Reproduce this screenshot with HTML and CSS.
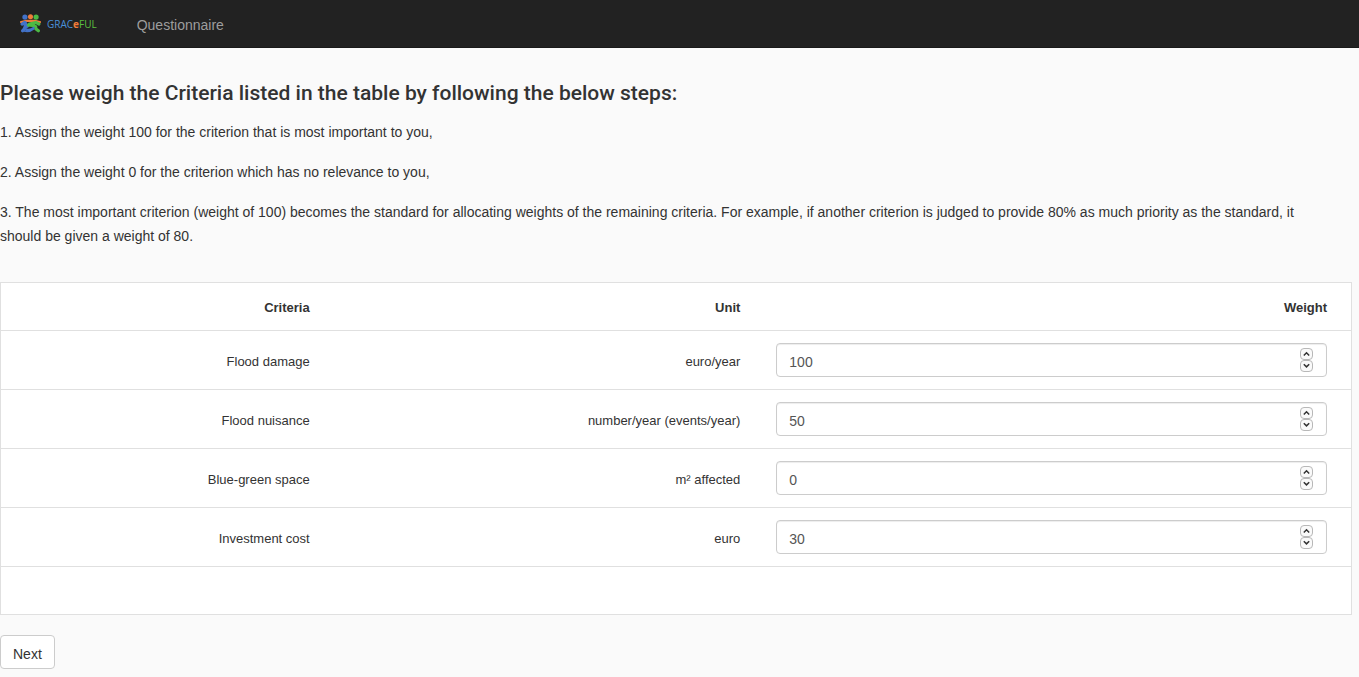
FILE: index.html
```html
<!DOCTYPE html>
<html lang="en">
<head>
<meta charset="utf-8">
<title>Questionnaire</title>
<link rel="stylesheet" href="styles.css">
</head>
<body>
<svg class="defs" aria-hidden="true">
  <symbol id="chev-up" viewBox="0 0 11 10"><path d="M2.800 6.500 5.500 3.800l2.700 2.700" fill="none" stroke="#333" stroke-width="1.500"/></symbol>
  <symbol id="chev-down" viewBox="0 0 11 10"><path d="M2.800 3.200 5.500 5.900l2.700-2.700" fill="none" stroke="#333" stroke-width="1.500"/></symbol>
</svg>
<nav class="navbar">
  <a class="brand" href="#">
    <svg class="brand-mark" viewBox="0 0 20 18" aria-hidden="true">
      <path d="M1 7.500 6 6.500h8l5 1" fill="none" stroke="#f07c3a" stroke-width="2" stroke-linecap="round"/>
      <g fill="none" stroke="#4272c8" stroke-width="3" stroke-linecap="round" stroke-linejoin="round">
        <path d="M2 9.500 4.500 8 7 11.500 4.500 13M5 8v5l-2.500 3"/>
      </g>
      <g fill="none" stroke="#4cb944" stroke-width="3" stroke-linecap="round" stroke-linejoin="round">
        <path d="M18 9.500 15 8l-6 1.500L15 12v2l2.500 2"/>
        <path d="M8 10.500h5"/>
      </g>
      <path d="M4 13.500c3 2 6 1.800 9-.500M4 16c4 1 6 .500 9-2" fill="none" stroke="#4272c8" stroke-width="1.800" stroke-linecap="round"/>
      <circle cx="4.700" cy="2.900" r="2.500" fill="#4272c8"/>
      <circle cx="10" cy="2.500" r="2.400" fill="#f07c3a"/>
      <circle cx="15.300" cy="2.900" r="2.500" fill="#4cb944"/>
    </svg>
    <span class="brand-name"><span class="blue">GRAC</span><span class="orange">e</span><span class="green">FUL</span></span>
  </a>
  <a class="nav-link" href="#">Questionnaire</a>
</nav>
<main>
  <h1 class="title">Please weigh the Criteria listed in the table by following the below steps:</h1>
  <p class="step">1. Assign the weight 100 for the criterion that is most important to you,</p>
  <p class="step">2. Assign the weight 0 for the criterion which has no relevance to you,</p>
  <p class="step">3. The most important criterion (weight of 100) becomes the standard for allocating weights of the remaining criteria. For example, if another criterion is judged to provide 80% as much priority as the standard, it should be given a weight of 80.</p>
  <form class="form">
    <table class="criteria">
      <colgroup><col class="col-name"><col class="col-unit"><col class="col-weight"></colgroup>
      <thead><tr><th scope="col">Criteria</th><th scope="col">Unit</th><th scope="col">Weight</th></tr></thead>
      <tbody>
        <tr><td><label for="w1">Flood damage</label></td><td>euro/year</td><td><div class="number"><input id="w1" type="number" value="100"><span class="spin"><button type="button" aria-label="Increase"><svg><use href="#chev-up"/></svg></button><button type="button" aria-label="Decrease"><svg><use href="#chev-down"/></svg></button></span></div></td></tr>
        <tr><td><label for="w2">Flood nuisance</label></td><td>number/year (events/year)</td><td><div class="number"><input id="w2" type="number" value="50"><span class="spin"><button type="button" aria-label="Increase"><svg><use href="#chev-up"/></svg></button><button type="button" aria-label="Decrease"><svg><use href="#chev-down"/></svg></button></span></div></td></tr>
        <tr><td><label for="w3">Blue-green space</label></td><td>m² affected</td><td><div class="number"><input id="w3" type="number" value="0"><span class="spin"><button type="button" aria-label="Increase"><svg><use href="#chev-up"/></svg></button><button type="button" aria-label="Decrease"><svg><use href="#chev-down"/></svg></button></span></div></td></tr>
        <tr><td><label for="w4">Investment cost</label></td><td>euro</td><td><div class="number"><input id="w4" type="number" value="30"><span class="spin"><button type="button" aria-label="Increase"><svg><use href="#chev-up"/></svg></button><button type="button" aria-label="Decrease"><svg><use href="#chev-down"/></svg></button></span></div></td></tr>
        <tr class="blank"><td></td><td></td><td></td></tr>
      </tbody>
    </table>
    <button class="next" type="button">Next</button>
  </form>
</main>
</body>
</html>
```
FILE: styles.css
```css
* { box-sizing: border-box; }
body {
  margin: 0;
  background: #fafafa;
  color: #333;
  font: 14px/24px "Liberation Sans", Arial, sans-serif;
}
.defs { display: none; }
.navbar {
  display: flex;
  align-items: center;
  gap: 40px;
  height: 48px;
  padding: 0 20px;
  background: #222;
  border-bottom: 1px solid #1a1a1a;
}
.brand {
  display: flex;
  align-items: center;
  gap: 6px;
  text-decoration: none;
}
.brand-mark { width: 21px; height: 19px; }
.brand-name { font: 10px/20px "Open Sans", sans-serif; }
.blue { color: #4a90d9; }
.orange { color: #f07c3a; font-weight: 700; }
.green { color: #5cc040; }
.nav-link { color: #9d9d9d; text-decoration: none; padding-top: 2px; }
.title {
  margin: 29px 0 11px;
  font: 500 21px/32px Roboto, sans-serif;
}
.step { margin: 0 0 16px; padding-right: 32px; }
.form { padding: 18px 7px 8px 0; }
.criteria {
  width: 100%;
  table-layout: fixed;
  border-collapse: separate;
  border-spacing: 0;
  border: 1px solid #e0e0e0;
  background: #fff;
  font-size: 13px;
  line-height: 24px;
  text-align: right;
}
.col-name { width: 24.2%; }
.col-unit { width: 31.9%; }
.criteria th { padding: 13px 18px 10px; text-align: right; }
.criteria td { padding: 16px 18px 12px; border-top: 1px solid #e0e0e0; }
.criteria th:last-child, .criteria td:last-child { padding-right: 24px; }
.criteria td:last-child { padding-top: 12px; }
.criteria .blank td { height: 48px; }
.number { position: relative; }
.number input {
  display: block;
  width: 100%;
  height: 34px;
  padding: 7px 36px 3px 12px;
  border: 1px solid #ccc;
  border-radius: 4px;
  background: #fff;
  box-shadow: inset 0 1px 1px rgba(0, 0, 0, .075);
  color: #555;
  font: 14px/20px "Liberation Sans", Arial, sans-serif;
  appearance: textfield;
}
.number input::-webkit-inner-spin-button { appearance: none; margin: 0; }
.spin {
  position: absolute;
  top: 5px;
  right: 14px;
  display: grid;
}
.spin button {
  width: 13px;
  height: 12px;
  padding: 0;
  border: 1px solid #b8b8b8;
  border-radius: 4px;
  background: #fafafa;
}
.spin svg { display: block; width: 11px; height: 10px; }
.next {
  display: block;
  margin-top: 20px;
  padding: 8px 12px 4px;
  border: 1px solid #ccc;
  border-radius: 4px;
  background: #fff;
  color: #333;
  font: 14px/20px "Liberation Sans", Arial, sans-serif;
}
```
